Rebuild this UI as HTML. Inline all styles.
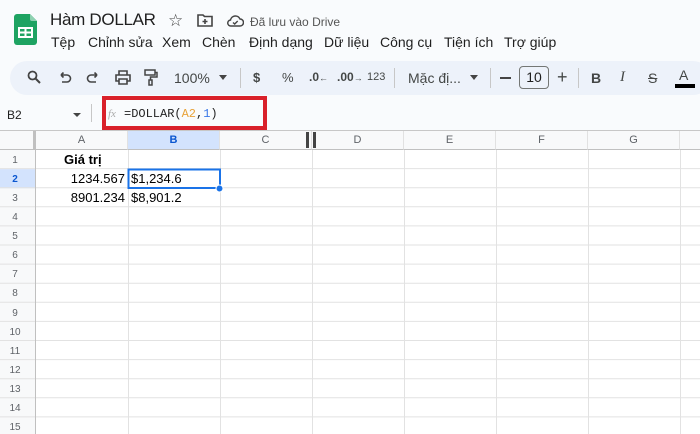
<!DOCTYPE html>
<html><head><meta charset="utf-8"><style>
*{margin:0;padding:0;box-sizing:border-box}
body{width:700px;height:434px;overflow:hidden;background:#fff;font-family:"Liberation Sans",Arial,sans-serif;position:relative;color:#202124}
.abs{position:absolute}
.top{left:0;top:0;width:700px;height:131px;background:#f9fbfd}
.title{left:50px;top:10px;font-size:17px;color:#1f1f1f;letter-spacing:-0.3px}
.menu{top:34px;font-size:14px;color:#1f1f1f}
.tb{left:10px;top:61px;width:700px;height:34px;background:#edf2fa;border-radius:17px}
.ti{top:70px;font-size:14px;color:#444746}
.sep{top:68px;width:1px;height:20px;background:#c7c7c7}
.grid div{position:absolute}
.ch{top:131px;height:19px;font-size:11px;color:#5f6368;text-align:center;line-height:19px;border-right:1px solid #e1e1e1;border-bottom:1px solid #c0c0c0;background:#f8f9fa}
</style></head><body>
<div class="abs top"></div>
<svg class="abs" style="left:14px;top:14px" width="23" height="31" viewBox="0 0 23 31"><path d="M3 0h13l7 7v21a3 3 0 0 1-3 3H3a3 3 0 0 1-3-3V3a3 3 0 0 1 3-3z" fill="#1ea362"/><path d="M16 0l7 7h-5a2 2 0 0 1-2-2z" fill="#8ed1b1"/><rect x="5" y="14" width="13" height="9" fill="none" stroke="#fff" stroke-width="2"/><path d="M5 18.5h13M11.5 14v9" stroke="#fff" stroke-width="2"/></svg>
<div class="abs title">Hàm DOLLAR</div>
<div class="abs" style="left:168px;top:11px;font-size:17px;color:#444">☆</div>
<svg class="abs" style="left:197px;top:14px" width="16" height="13" viewBox="0 0 16 13"><path d="M1 1h5l1.5 1.5H15V12H1z" fill="none" stroke="#444" stroke-width="1.6"/><path d="M8 5v5M5.5 7.5h5" stroke="#444" stroke-width="1.6"/></svg>
<svg class="abs" style="left:226px;top:15px" width="18" height="12" viewBox="0 0 18 12"><path d="M5 11h9a3.5 3.5 0 0 0 0-7 5 5 0 0 0-9.5 1A3 3 0 0 0 5 11z" fill="none" stroke="#444" stroke-width="1.5"/><path d="M7 7.5l1.7 1.5 3-3" fill="none" stroke="#444" stroke-width="1.4"/></svg>
<div class="abs" style="left:250px;top:15px;font-size:12px;color:#555">Đã lưu vào Drive</div>
<div class="abs menu" style="left:51px">Tệp</div>
<div class="abs menu" style="left:88px">Chỉnh sửa</div>
<div class="abs menu" style="left:162px">Xem</div>
<div class="abs menu" style="left:202px">Chèn</div>
<div class="abs menu" style="left:249px">Định dạng</div>
<div class="abs menu" style="left:324px">Dữ liệu</div>
<div class="abs menu" style="left:380px">Công cụ</div>
<div class="abs menu" style="left:444px">Tiện ích</div>
<div class="abs menu" style="left:504px">Trợ giúp</div>
<div class="abs tb"></div>
<svg class="abs" style="left:27px;top:70px" width="14" height="14" viewBox="0 0 14 14"><circle cx="5.5" cy="5.5" r="4" fill="none" stroke="#444" stroke-width="1.8"/><path d="M8.5 8.5l4.5 4.5" stroke="#444" stroke-width="2"/></svg>
<svg class="abs" style="left:58px;top:72px" width="14" height="12" viewBox="0 0 14 12"><path d="M3 3h6a3.5 3.5 0 0 1 0 7H4M3 3l2.5-2.5M3 3l2.5 2.5" fill="none" stroke="#444" stroke-width="1.6"/></svg>
<svg class="abs" style="left:86px;top:72px" width="14" height="12" viewBox="0 0 14 12"><path d="M11 3H5a3.5 3.5 0 0 0 0 7h5M11 3L8.5.5M11 3L8.5 5.5" fill="none" stroke="#444" stroke-width="1.6"/></svg>
<svg class="abs" style="left:115px;top:70px" width="16" height="15" viewBox="0 0 16 15"><path d="M4 5V1h8v4M4 11H1V5h14v6h-3M4 9h8v5H4z" fill="none" stroke="#444" stroke-width="1.6"/></svg>
<svg class="abs" style="left:144px;top:69px" width="14" height="17" viewBox="0 0 14 17"><path d="M1 1h10v5H1zM11 3.5h2V8H6.5v3M5 11h3v5H5z" fill="none" stroke="#444" stroke-width="1.5"/></svg>
<div class="abs ti" style="left:174px">100%</div>
<div class="abs" style="left:219px;top:75px;border:4px solid transparent;border-top:5px solid #444"></div>
<div class="abs sep" style="left:240px"></div>
<div class="abs ti" style="left:253px;font-weight:bold;font-size:13px">$</div>
<div class="abs ti" style="left:282px;font-size:13px">%</div>
<div class="abs ti" style="left:309px;font-size:12px;font-weight:bold">.0<span style="font-size:9px">←</span></div>
<div class="abs ti" style="left:337px;font-size:12px;font-weight:bold">.00<span style="font-size:9px">→</span></div>
<div class="abs ti" style="left:367px;font-size:11px;top:71px">123</div>
<div class="abs sep" style="left:394px"></div>
<div class="abs ti" style="left:408px">Mặc đị...</div>
<div class="abs" style="left:470px;top:75px;border:4px solid transparent;border-top:5px solid #444"></div>
<div class="abs sep" style="left:490px"></div>
<div class="abs" style="left:500px;top:77px;width:11px;height:2px;background:#444"></div>
<div class="abs" style="left:519px;top:66px;width:30px;height:23px;border:1px solid #747775;border-radius:4px;font-size:14px;text-align:center;line-height:21px;color:#1f1f1f">10</div>
<div class="abs ti" style="left:557px;top:67px;font-size:18px">+</div>
<div class="abs sep" style="left:578px"></div>
<div class="abs ti" style="left:591px;font-weight:bold">B</div>
<div class="abs ti" style="left:620px;font-style:italic;font-family:'Liberation Serif',serif;font-size:15px;top:69px">I</div>
<div class="abs ti" style="left:648px;text-decoration:line-through">S</div>
<div class="abs ti" style="left:679px;top:67px">A</div>
<div class="abs" style="left:675px;top:84px;width:20px;height:4px;background:#000"></div>
<div class="abs" style="left:7px;top:108px;font-size:12px;color:#1f1f1f">B2</div>
<div class="abs" style="left:73px;top:113px;border:4px solid transparent;border-top:4px solid #444"></div>
<div class="abs" style="left:91px;top:104px;width:1px;height:18px;background:#c7c7c7"></div>
<div class="abs" style="left:102px;top:96px;width:165px;height:34px;border:4px solid #d9202a"></div>
<div class="abs" style="left:108px;top:108px;font-size:11px;color:#aaa;font-style:italic;font-family:'Liberation Serif',serif">fx</div>
<div class="abs" style="left:124px;top:107px;font-size:12px;font-family:'Liberation Mono',monospace;color:#222">=DOLLAR(<span style="color:#e8a33a">A2</span>,<span style="color:#3b78e7">1</span>)</div>
<div class="abs" style="left:0;top:130px;width:700px;height:1px;background:#c7c7c7"></div>
<div class="grid">
<div class="ch" style="left:0;width:36px;border-right:3px solid #c0c0c0"></div>
<div class="ch" style="left:36px;width:92px">A</div>
<div class="ch" style="left:128px;width:92px;background:#d3e3fd;color:#0b57d0;font-weight:bold">B</div>
<div class="ch" style="left:220px;width:92px">C</div>
<div class="ch" style="left:312px;width:92px">D</div>
<div class="ch" style="left:404px;width:92px">E</div>
<div class="ch" style="left:496px;width:92px">F</div>
<div class="ch" style="left:588px;width:92px">G</div>
<div class="ch" style="left:680px;width:30px"></div>
<div style="left:306px;top:132px;width:3px;height:16px;background:#444"></div>
<div style="left:313px;top:132px;width:3px;height:16px;background:#444"></div>
</div>
<svg class="abs" style="left:0;top:150px" width="700" height="284">
<g stroke="#e2e2e2" stroke-width="1">
<path d="M128.5 0V284M220.5 0V284M312.5 0V284M404.5 0V284M496.5 0V284M588.5 0V284M680.5 0V284"/>
<path d="M36 18.6H700M36 37.7H700M36 56.8H700M36 75.9H700M36 95H700M36 114.1H700M36 133.2H700M36 152.3H700M36 171.4H700M36 190.5H700M36 209.6H700M36 228.7H700M36 247.8H700M36 266.9H700"/>
</g>
<rect x="0" y="0" width="36" height="284" fill="#f8f9fa"/>
<rect x="0" y="19.1" width="36" height="19.1" fill="#d3e3fd"/>
<path d="M35.5 0V284" stroke="#c0c0c0"/>
<g stroke="#e2e2e2"><path d="M0 18.6H35M0 37.7H35M0 56.8H35M0 75.9H35M0 95H35M0 114.1H35M0 133.2H35M0 152.3H35M0 171.4H35M0 190.5H35M0 209.6H35M0 228.7H35M0 247.8H35M0 266.9H35"/></g>
<g font-family="Liberation Sans,Arial,sans-serif" font-size="10" fill="#5f6368" text-anchor="middle">
<text x="15" y="13">1</text><text x="15" y="32" fill="#0b57d0" font-weight="bold">2</text><text x="15" y="51">3</text><text x="15" y="70">4</text><text x="15" y="89">5</text><text x="15" y="108">6</text><text x="15" y="127">7</text><text x="15" y="146">8</text><text x="15" y="166">9</text><text x="15" y="185">10</text><text x="15" y="204">11</text><text x="15" y="223">12</text><text x="15" y="242">13</text><text x="15" y="261">14</text><text x="15" y="280">15</text>
</g>
<g font-family="Liberation Sans,Arial,sans-serif" font-size="13" fill="#000">
<text x="64" y="14" font-weight="bold">Giá trị</text>
<text x="125" y="33" text-anchor="end">1234.567</text>
<text x="125" y="52" text-anchor="end">8901.234</text>
<text x="131" y="33">$1,234.6</text>
<text x="131" y="52">$8,901.2</text>
</g>
<rect x="128.5" y="19.5" width="91.5" height="18.5" fill="none" stroke="#1a73e8" stroke-width="2"/>
<circle cx="219.5" cy="38.5" r="3.5" fill="#1a73e8" stroke="#fff"/>
</svg>
</body></html>
